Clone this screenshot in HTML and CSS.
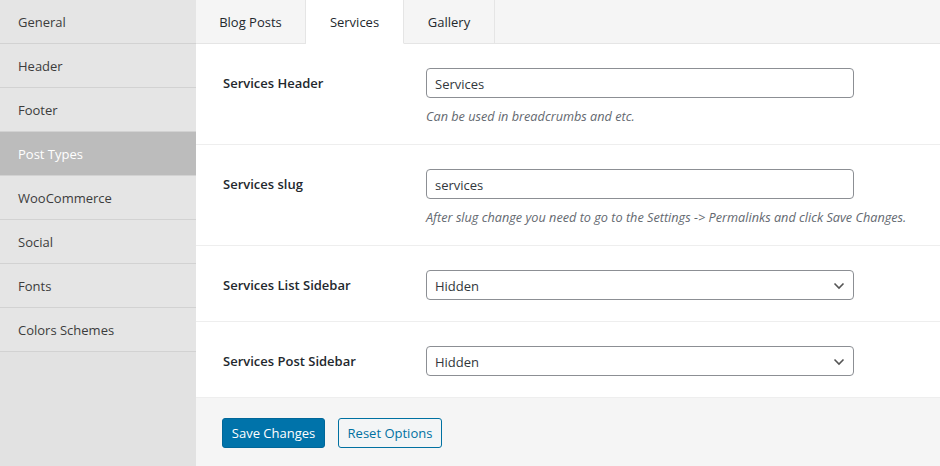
FILE: index.html
```html
<!DOCTYPE html>
<html>
<head>
<meta charset="utf-8">
<link rel="stylesheet" href="styles.css">
</head>
<body>
<div class="wrap">
  <nav class="side">
    <a class="side-item">General</a>
    <a class="side-item">Header</a>
    <a class="side-item">Footer</a>
    <a class="side-item active">Post Types</a>
    <a class="side-item">WooCommerce</a>
    <a class="side-item">Social</a>
    <a class="side-item">Fonts</a>
    <a class="side-item">Colors Schemes</a>
  </nav>
  <main class="main">
    <div class="tabs">
      <div class="tab t1">Blog Posts</div>
      <div class="tab t2 active">Services</div>
      <div class="tab t3">Gallery</div>
    </div>
    <div class="rows">
      <div class="row">
        <div class="label">Services Header</div>
        <div class="field">
          <div class="input">Services</div>
          <p class="desc">Can be used in breadcrumbs and etc.</p>
        </div>
      </div>
      <div class="row">
        <div class="label">Services slug</div>
        <div class="field">
          <div class="input">services</div>
          <p class="desc">After slug change you need to go to the Settings -&gt; Permalinks and click Save Changes.</p>
        </div>
      </div>
      <div class="row short">
        <div class="label">Services List Sidebar</div>
        <div class="field">
          <div class="input select">Hidden
            <svg class="chev" width="12" height="8" viewBox="0 0 12 8"><path d="M1.5 1.5 L6 6 L10.5 1.5" fill="none" stroke="#555" stroke-width="1.6"/></svg>
          </div>
        </div>
      </div>
      <div class="row short">
        <div class="label">Services Post Sidebar</div>
        <div class="field">
          <div class="input select">Hidden
            <svg class="chev" width="12" height="8" viewBox="0 0 12 8"><path d="M1.5 1.5 L6 6 L10.5 1.5" fill="none" stroke="#555" stroke-width="1.6"/></svg>
          </div>
        </div>
      </div>
    </div>
    <div class="actions">
      <button class="btn primary">Save Changes</button>
      <button class="btn secondary">Reset Options</button>
    </div>
  </main>
</div>
</body>
</html>
```
FILE: styles.css
```css
* { box-sizing: border-box; }
html, body { margin: 0; padding: 0; height: 100%; }
body {
  font-family: "Open Sans", "Noto Sans", sans-serif;
  font-size: 13px;
  color: #444;
  background: #f5f5f5;
}
.wrap {
  display: flex;
  width: 940px;
  height: 466px;
  overflow: hidden;
}
.side {
  width: 196px;
  flex: none;
  background: #e2e2e2;
  display: flex;
  flex-direction: column;
}
.side-item {
  display: block;
  height: 44px;
  line-height: 44px;
  padding-left: 18px;
  background: #e5e5e5;
  border-bottom: 1px solid #d2d2d2;
  color: #3c3c3c;
  font-size: 13px;
  white-space: nowrap;
}
.side-item.active {
  background: #bcbcbc;
  color: #fff;
}
.main {
  flex: 1;
  display: flex;
  flex-direction: column;
  background: #fff;
}
.tabs {
  display: flex;
  height: 44px;
  background: #f5f5f5;
  border-bottom: 1px solid #e5e5e5;
}
.tab {
  height: 44px;
  line-height: 45px;
  text-align: center;
  white-space: nowrap;
  border-right: 1px solid #e5e5e5;
  color: #23282d;
  font-size: 13px;
}
.t1 { width: 110px; }
.t2 { width: 98px; }
.t3 { width: 91px; }
.tab.active {
  background: #fff;
  border-bottom: 1px solid #fff;
}
.rows { display: flex; flex-direction: column; }
.row {
  display: grid;
  grid-template-columns: 203px 1fr;
  padding: 24px 0 0 27px;
  height: 101px;
  border-bottom: 1px solid #eee;
}
.row.short { height: 76px; }
.label {
  font-weight: 600;
  color: #23282d;
  font-size: 13px;
  padding-top: 6px;
  white-space: nowrap;
}
.input {
  width: 428px;
  height: 30px;
  border: 1px solid #8c8f94;
  border-radius: 4px;
  padding: 0 8px;
  line-height: 30px;
  color: #32373c;
  font-size: 13px;
  background: #fff;
}
.select {
  display: flex;
  justify-content: space-between;
  align-items: center;
  padding-right: 8px;
  padding-top: 1px;
}
.chev { display: block; }
.desc {
  margin: 9px 0 0;
  font-style: italic;
  color: #646970;
  font-size: 12.7px;
  white-space: nowrap;
}
.actions {
  flex: 1;
  background: #f5f5f5;
  padding: 20px 0 0 26px;
  display: flex;
  align-items: flex-start;
  gap: 13px;
}
.btn {
  font-family: inherit;
  font-size: 13px;
  height: 30px;
  padding: 0;
  border-radius: 3px;
  white-space: nowrap;
  cursor: pointer;
}
.primary {
  background: #0073aa;
  border: 1px solid #006799;
  color: #fff;
  width: 103px;
}
.secondary {
  background: #f3f5f6;
  border: 1px solid #0071a1;
  color: #0071a1;
  width: 104px;
}
```
